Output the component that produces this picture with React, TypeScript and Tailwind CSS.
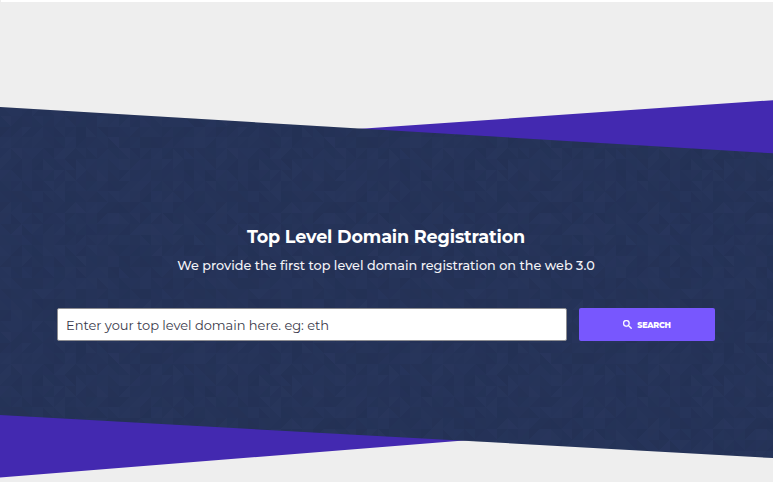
import React from "react";

const CELL = 10.8;
const COUNT = 20;
const TILE = CELL * COUNT;

// Small deterministic generator so that the triangle texture is stable.
function createRandom(seed: number) {
  let s = seed;
  return () => {
    s = (s * 1664525 + 1013904223) % 4294967296;
    return s / 4294967296;
  };
}

function buildTriangles() {
  const random = createRandom(29);
  const shapes: React.ReactElement[] = [];
  for (let row = 0; row < COUNT; row++) {
    for (let col = 0; col < COUNT; col++) {
      const x = col * CELL;
      const y = row * CELL;
      const r = x + CELL;
      const b = y + CELL;
      const falling = random() > 0.5;
      const halves = falling
        ? [`${x},${y} ${r},${y} ${r},${b}`, `${x},${y} ${x},${b} ${r},${b}`]
        : [`${x},${y} ${r},${y} ${x},${b}`, `${r},${y} ${r},${b} ${x},${b}`];
      const base = random();
      halves.forEach((points, i) => {
        const tone = base * 0.25 + random() * 0.75;
        shapes.push(
          <polygon
            key={`${row}-${col}-${i}`}
            points={points}
            fill={tone > 0.5 ? "#3b4778" : "#17223f"}
            opacity={Math.abs(tone - 0.5) * 0.26}
          />,
        );
      });
    }
  }
  return shapes;
}

function Backdrop() {
  return (
    <svg
      className="absolute inset-0 h-full w-full"
      viewBox="0 0 773 482"
      preserveAspectRatio="none"
      aria-hidden="true"
    >
      <defs>
        <pattern id="triangles" x="0" y="-3" width={TILE} height={TILE} patternUnits="userSpaceOnUse" shapeRendering="crispEdges">
          {buildTriangles()}
        </pattern>
      </defs>
      <polygon points="350,129.6 773,100.2 773,160 420,140" fill="#4329b0" />
      <polygon points="0,400 470,430 470,439.9 0,477.4" fill="#4329b0" />
      <polygon points="0,107 773,153.3 773,458 0,415" fill="#253358" />
      <polygon points="0,107 773,153.3 773,458 0,415" fill="url(#triangles)" />
    </svg>
  );
}

function SearchIcon() {
  return (
    <svg viewBox="3 3 17.5 17.5" className="h-[9px] w-[9px] shrink-0" fill="currentColor" stroke="currentColor" strokeWidth="0.7" aria-hidden="true">
      <path d="M15.5 14h-.79l-.28-.27A6.47 6.47 0 0 0 16 9.5 6.5 6.5 0 1 0 9.5 16c1.61 0 3.09-.59 4.23-1.57l.27.28v.79l5 4.99L20.49 19l-4.99-5zm-6 0C7.01 14 5 11.99 5 9.5S7.01 5 9.5 5 14 7.01 14 9.5 11.99 14 9.5 14z" />
    </svg>
  );
}

export default function App() {
  return (
    <main className="relative h-[482px] w-full overflow-hidden bg-[#eeeeee] font-[Montserrat,Inter,sans-serif]">
      <Backdrop />
      <div className="relative ml-px h-0.5 bg-white" />
      <section className="relative flex flex-col items-center pt-[222px]">
        <h1 className="mr-px h-6 text-[17.6px] leading-[25px] font-bold tracking-[-0.15px] whitespace-nowrap text-white">
          Top Level Domain Registration
        </h1>
        <p className="mt-2 mr-px h-5 text-[12.8px] leading-5 font-medium whitespace-nowrap text-[#f4f4f8]">
          We provide the first top level domain registration on the web 3.0
        </p>
        <form className="mt-8 flex w-full gap-3 pr-[58px] pl-[57px]" onSubmit={(e) => e.preventDefault()}>
          <input
            className="h-[33px] min-w-0 flex-1 rounded-[2px] border border-[#8d8d91] bg-white px-2 text-[13px] tracking-[-0.03px] text-[#39394a] outline-none placeholder:text-[#39394a] placeholder:opacity-100"
            placeholder="Enter your top level domain here. eg: eth"
            aria-label="Top level domain"
          />
          <button
            type="submit"
            className="flex h-[33px] w-[136px] items-center justify-center gap-[5px] rounded-[2px] bg-[#7857fe] text-[8px] font-extrabold tracking-[-0.25px] text-white"
          >
            <SearchIcon />
            <span>SEARCH</span>
          </button>
        </form>
      </section>
    </main>
  );
}
